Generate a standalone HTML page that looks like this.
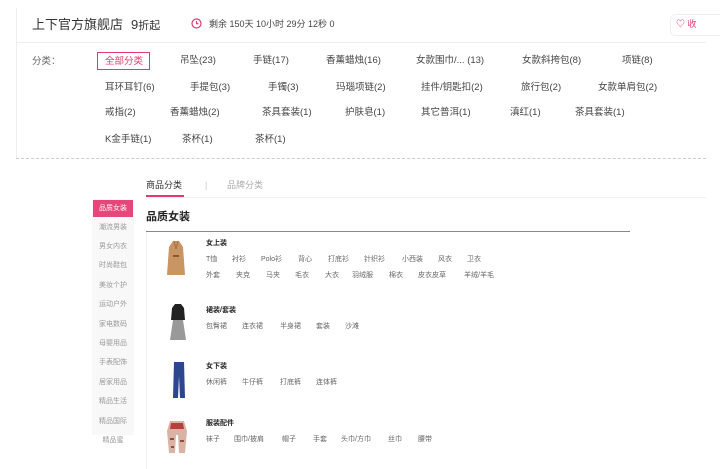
<!DOCTYPE html>
<html><head><meta charset="utf-8"><style>
*{margin:0;padding:0;box-sizing:border-box}
body{width:720px;height:469px;background:#fff;position:relative;overflow:hidden;font-family:"Liberation Sans","Noto Sans CJK SC",sans-serif;color:#333}
.a{position:absolute;white-space:nowrap;line-height:1}
.c{font-size:9.5px;color:#444}
.s{font-size:7px;color:#666}
.t{font-size:7px;color:#222;font-weight:bold}
.sb{font-size:7px;color:#999;left:93px;width:40px;text-align:center}
</style></head><body>
<div class="a" style="left:16px;top:8px;width:690px;height:150px;border-left:1px solid #eee"></div>
<div class="a" style="left:16px;top:42px;width:690px;border-top:1px solid #eee"></div>
<div class="a" style="left:16px;top:158px;width:690px;border-top:1px dashed #ccc"></div>
<div class="a" style="left:32px;top:18px;font-size:13px;color:#333">上下官方旗舰店</div>
<div class="a" style="left:131px;top:18px;font-size:13px;color:#333">9<span style="font-size:11px">折起</span></div>
<svg class="a" style="left:191px;top:18px" width="11" height="11" viewBox="0 0 11 11"><circle cx="5.5" cy="5.5" r="4.5" fill="none" stroke="#e4386f" stroke-width="1.2"/><path d="M5.5 3v2.7h2" fill="none" stroke="#e4386f" stroke-width="1.1"/></svg>
<div class="a" style="left:209px;top:20px;font-size:9px;color:#444">剩余 150天 10小时 29分 12秒 0</div>
<div class="a" style="left:670px;top:14px;width:60px;height:22px;border:1px solid #eee;border-radius:5px"></div>
<div class="a" style="left:676px;top:20px;font-size:9px;color:#e4386f">♡ 收</div>

<div class="a c" style="left:32px;top:57px;color:#666">分类：</div>
<div class="a" style="left:97px;top:52px;width:53px;height:18px;border:1px solid #e4386f"></div>
<div class="a c" style="left:105px;top:57px;color:#e4386f">全部分类</div>
<div class="a c" style="left:180px;top:56px">吊坠(23)</div>
<div class="a c" style="left:253px;top:56px">手链(17)</div>
<div class="a c" style="left:326px;top:56px">香薰蜡烛(16)</div>
<div class="a c" style="left:416px;top:56px">女款围巾/... (13)</div>
<div class="a c" style="left:522px;top:56px">女款斜挎包(8)</div>
<div class="a c" style="left:622px;top:56px">项链(8)</div>
<div class="a c" style="left:105px;top:83px">耳环耳钉(6)</div>
<div class="a c" style="left:190px;top:83px">手提包(3)</div>
<div class="a c" style="left:268px;top:83px">手镯(3)</div>
<div class="a c" style="left:336px;top:83px">玛瑙项链(2)</div>
<div class="a c" style="left:421px;top:83px">挂件/钥匙扣(2)</div>
<div class="a c" style="left:521px;top:83px">旅行包(2)</div>
<div class="a c" style="left:598px;top:83px">女款单肩包(2)</div>
<div class="a c" style="left:105px;top:108px">戒指(2)</div>
<div class="a c" style="left:170px;top:108px">香薰蜡烛(2)</div>
<div class="a c" style="left:262px;top:108px">茶具套装(1)</div>
<div class="a c" style="left:345px;top:108px">护肤皂(1)</div>
<div class="a c" style="left:421px;top:108px">其它普洱(1)</div>
<div class="a c" style="left:510px;top:108px">滇红(1)</div>
<div class="a c" style="left:575px;top:108px">茶具套装(1)</div>
<div class="a c" style="left:105px;top:135px">K金手链(1)</div>
<div class="a c" style="left:182px;top:135px">茶杯(1)</div>
<div class="a c" style="left:255px;top:135px">茶杯(1)</div>

<div class="a" style="left:146px;top:181px;font-size:9px;color:#333">商品分类</div>
<div class="a" style="left:146px;top:195px;width:38px;border-top:2px solid #e4386f"></div>
<div class="a" style="left:205px;top:181px;font-size:9px;color:#ccc">|</div>
<div class="a" style="left:227px;top:181px;font-size:9px;color:#aaa">品牌分类</div>
<div class="a" style="left:146px;top:197px;width:560px;border-top:1px solid #f2f2f2"></div>

<div class="a" style="left:92px;top:199px;width:42px;height:236px;background:#f8f8f8"></div>
<div class="a" style="left:93px;top:200px;width:40px;height:17px;background:#e8457a"></div>
<div class="a sb" style="top:205px;color:#fff">品质女装</div>
<div class="a sb" style="top:224px">潮流男装</div>
<div class="a sb" style="top:243px">男女内衣</div>
<div class="a sb" style="top:262px">时尚鞋包</div>
<div class="a sb" style="top:282px">美妆个护</div>
<div class="a sb" style="top:301px">运动户外</div>
<div class="a sb" style="top:321px">家电数码</div>
<div class="a sb" style="top:340px">母婴用品</div>
<div class="a sb" style="top:359px">手表配饰</div>
<div class="a sb" style="top:379px">居家用品</div>
<div class="a sb" style="top:398px">精品生活</div>
<div class="a sb" style="top:418px">精品国际</div>
<div class="a sb" style="top:437px">精品蜜</div>

<div class="a" style="left:146px;top:212px;font-size:11px;font-weight:bold;color:#222">品质女装</div>
<div class="a" style="left:146px;top:231px;width:484px;border-top:1px solid #888"></div>
<div class="a" style="left:146px;top:232px;height:237px;border-left:1px solid #f0f0f0"></div>

<svg class="a" style="left:166px;top:240px" width="20" height="36" viewBox="0 0 20 36"><path d="M7 1h6l4 6 2 28H1L3 7z" fill="#c99562"/><path d="M8 1l2 8 2-8" fill="none" stroke="#a0703f" stroke-width="1"/><rect x="7" y="15" width="6" height="2" fill="#8a5a30"/></svg>
<svg class="a" style="left:170px;top:303px" width="16" height="38" viewBox="0 0 16 38"><path d="M5 1h6l3 4 1 12H1l1-12z" fill="#222"/><path d="M3 17h10l3 20H0z" fill="#999"/></svg>
<svg class="a" style="left:173px;top:362px" width="12" height="36" viewBox="0 0 12 36"><path d="M1 0h10l1 36H7L6 14 5 36H0z" fill="#2c4690"/></svg>
<svg class="a" style="left:166px;top:419px" width="22" height="36" viewBox="0 0 22 36"><path d="M4 2h14l3 10-2 22h-6l-1-18-2 0-1 18H3L1 12z" fill="#d9b4a4"/><path d="M5 4h12l1 6H4z" fill="#b5403e"/><path d="M4 20h4M14 22h4M5 28h3" stroke="#8a5040" stroke-width="2"/></svg>

<div class="a t" style="left:206px;top:240px">女上装</div>
<div class="a s" style="left:206px;top:256px">T恤</div><div class="a s" style="left:232px;top:256px">衬衫</div><div class="a s" style="left:261px;top:256px">Polo衫</div><div class="a s" style="left:298px;top:256px">背心</div><div class="a s" style="left:328px;top:256px">打底衫</div><div class="a s" style="left:364px;top:256px">针织衫</div><div class="a s" style="left:402px;top:256px">小西装</div><div class="a s" style="left:438px;top:256px">风衣</div><div class="a s" style="left:467px;top:256px">卫衣</div>
<div class="a s" style="left:206px;top:272px">外套</div><div class="a s" style="left:236px;top:272px">夹克</div><div class="a s" style="left:266px;top:272px">马夹</div><div class="a s" style="left:295px;top:272px">毛衣</div><div class="a s" style="left:325px;top:272px">大衣</div><div class="a s" style="left:352px;top:272px">羽绒服</div><div class="a s" style="left:389px;top:272px">棉衣</div><div class="a s" style="left:418px;top:272px">皮衣皮草</div><div class="a s" style="left:464px;top:272px">羊绒/羊毛</div>

<div class="a t" style="left:206px;top:307px">裙装/套装</div>
<div class="a s" style="left:206px;top:323px">包臀裙</div><div class="a s" style="left:242px;top:323px">连衣裙</div><div class="a s" style="left:280px;top:323px">半身裙</div><div class="a s" style="left:316px;top:323px">套装</div><div class="a s" style="left:345px;top:323px">沙滩</div>

<div class="a t" style="left:206px;top:363px">女下装</div>
<div class="a s" style="left:206px;top:379px">休闲裤</div><div class="a s" style="left:242px;top:379px">牛仔裤</div><div class="a s" style="left:280px;top:379px">打底裤</div><div class="a s" style="left:316px;top:379px">连体裤</div>

<div class="a t" style="left:206px;top:420px">服装配件</div>
<div class="a s" style="left:206px;top:436px">袜子</div><div class="a s" style="left:234px;top:436px">围巾/披肩</div><div class="a s" style="left:282px;top:436px">帽子</div><div class="a s" style="left:313px;top:436px">手套</div><div class="a s" style="left:341px;top:436px">头巾/方巾</div><div class="a s" style="left:388px;top:436px">丝巾</div><div class="a s" style="left:418px;top:436px">腰带</div>
</body></html>
